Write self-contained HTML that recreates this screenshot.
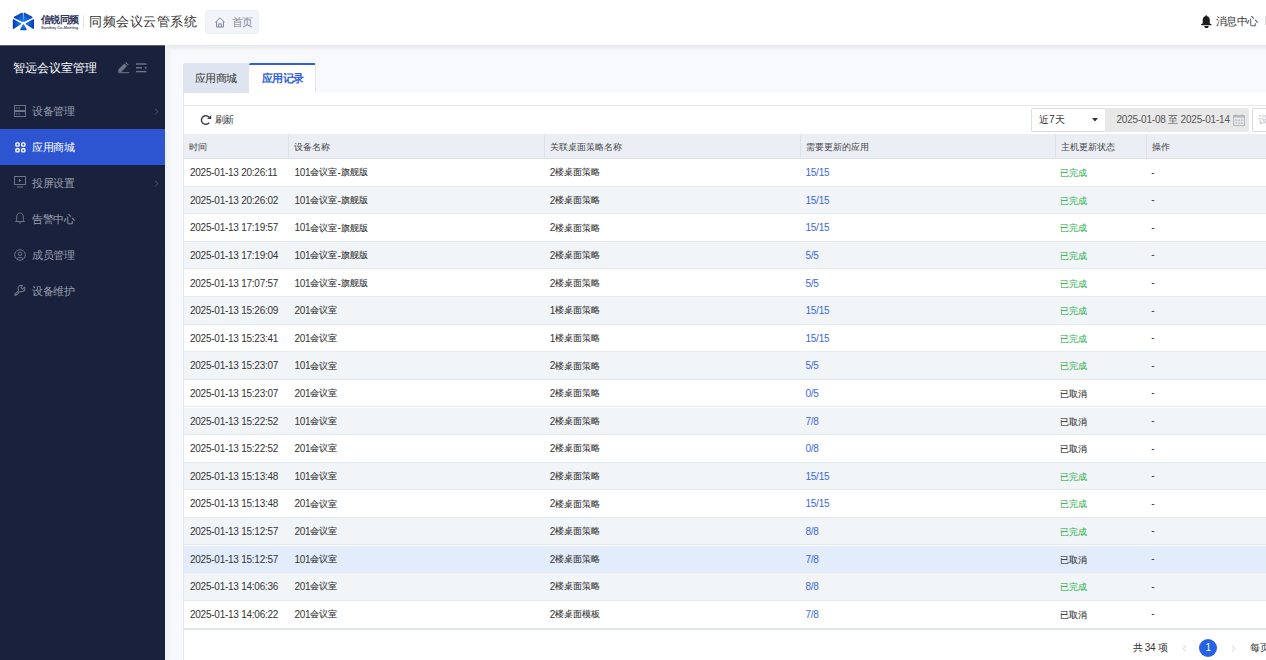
<!DOCTYPE html>
<html><head><meta charset="utf-8">
<style>
*{margin:0;padding:0;box-sizing:border-box}
html,body{width:1266px;height:660px;overflow:hidden;background:#f7f9fc;font-family:"Liberation Sans",sans-serif;color:#333}
.abs{position:absolute}
#hdr{position:absolute;left:0;top:0;width:1266px;height:45px;background:#fff;z-index:5}
#shadow{position:absolute;left:165px;top:45px;width:1101px;height:6px;background:linear-gradient(#e6e7ea,#f7f9fc);}
#lshadow{position:absolute;left:165px;top:45px;width:8px;height:615px;background:linear-gradient(90deg,#eeeff1,rgba(247,249,252,0));}
#side{position:absolute;left:0;top:45px;width:165px;height:615px;background:#19213d;z-index:6;border-top:0.5px solid #5a6070}
.mi{position:absolute;left:0;width:165px;height:36px;}
.mi .t{position:absolute;left:32px;top:0;line-height:36px;font-size:11px;letter-spacing:-0.4px;color:#9a9fad;white-space:nowrap}
.mi.act{background:#2d55d1}
.mi.act .t{color:#fff}
.mi .ar{position:absolute;left:154px;top:14.5px;width:5px;height:7px}
.mi svg.ic{position:absolute;left:14px;top:11px}
.n{font-family:"Liberation Sans",sans-serif}
#card{position:absolute;left:183px;top:93px;width:1083px;height:567px;background:#fff;border-left:1px solid #e3e7ee}
.row{position:absolute;left:183px;width:1083px;height:27.6px;background:#fff;border-bottom:1px solid #e4e8ef;border-left:1px solid #e3e7ee}
.row.st{background:#f2f5f8}
.row.hv{background:#e3ecfb}
.row.last{border-bottom:none}
.td{position:absolute;top:0;line-height:27px;white-space:nowrap;font-size:9px;color:#333;margin-left:-183px}
.td .n{font-size:10px;letter-spacing:-0.25px;position:relative;top:0px}
.td .c{position:relative;top:-0.8px;-webkit-text-stroke:0.08px currentColor}
.td.ok .c,.td.cx .c{top:1px}
.td.lk .n{color:#3b68e2}
.td.ok{color:#36b455}
.th{position:absolute;top:135px;line-height:24px;font-size:9px;color:#444;white-space:nowrap}
.vd{position:absolute;top:134px;width:1px;height:24.1px;background:#dde2ea}
</style></head><body>
<div id="hdr">
  <svg class="abs" style="left:12px;top:11px" width="23" height="20" viewBox="12 11 23 20">
    <defs><radialGradient id="lg" cx="23.4" cy="22.6" r="11" gradientUnits="userSpaceOnUse"><stop offset="0" stop-color="#1d8ff5"/><stop offset="0.55" stop-color="#0f5fd8"/><stop offset="1" stop-color="#0736b5"/></radialGradient></defs>
    <g fill="url(#lg)" stroke="url(#lg)" stroke-width="1.3" stroke-linejoin="round">
    <polygon points="14.4,17.3 22.1,13.2 22.6,21.4"/>
    <polygon points="24.3,13.2 32,17.3 23.8,21.4"/>
    <polygon points="13.4,19.8 20.6,23.7 13.5,28.3"/>
    <polygon points="33.4,19.8 26.2,23.7 33.3,28.3"/>
    <polygon points="23.4,24.9 20.8,29.5 26.1,29.5"/>
    </g>
  </svg>
  <div class="abs" style="left:40.5px;top:14px;font-size:10px;font-weight:700;letter-spacing:-0.4px;color:#30345a;white-space:nowrap;line-height:12px">信锐同频</div>
  <div class="abs" style="left:41px;top:25.8px;font-size:4px;letter-spacing:-0.1px;font-weight:700;color:#55586e;white-space:nowrap;line-height:4px">Sundray Co-Meeting</div>
  <div class="abs" style="left:83px;top:14.5px;width:1px;height:14px;background:#e6e6e6"></div>
  <div class="abs" style="left:89px;top:14px;font-size:13px;letter-spacing:0.5px;color:#333;white-space:nowrap;line-height:16px">同频会议云管系统</div>
  <div class="abs" style="left:205.4px;top:10.1px;width:53.3px;height:23.5px;background:#f1f4f8;border:1px solid #edf0f4;border-radius:2.5px"></div>
  <svg class="abs" style="left:214.5px;top:16.5px" width="10" height="11" viewBox="0 0 10 11"><path d="M0.4 5.4 L5 0.8 L9.6 5.4 M1.6 4.3 V10 H8.4 V4.3 M3.7 10 V6.9 H6.3 V10" fill="none" stroke="#7c8597" stroke-width="1"/></svg>
  <div class="abs" style="left:231.5px;top:16px;font-size:11px;letter-spacing:-0.2px;color:#7d8699;white-space:nowrap;line-height:13px">首页</div>
  <svg class="abs" style="left:1201px;top:14.7px" width="10.5" height="13.6" viewBox="0 0 10.5 13.6"><path d="M5.25 0.3 C5.8 0.3 6.1 0.7 6.2 1.2 C8 1.7 8.8 3.2 8.8 5 V8.4 L10.4 9.3 V10.2 H0.1 V9.3 L1.7 8.4 V5 C1.7 3.2 2.5 1.7 4.3 1.2 C4.4 0.7 4.7 0.3 5.25 0.3 Z M3.3 11 H7.7 C7.7 12.3 6.7 13.2 5.5 13.2 C4.3 13.2 3.3 12.3 3.3 11 Z" fill="#1c1c1c"/></svg>
  <div class="abs" style="left:1215.5px;top:15px;font-size:11px;letter-spacing:-0.5px;color:#333;white-space:nowrap;line-height:13px">消息中心</div>
  <div class="abs" style="left:1265px;top:16px;width:1px;height:9px;background:#ddd"></div>
</div>
<div id="shadow"></div><div id="lshadow"></div>
<div id="side">
  <div class="abs" style="left:12.5px;top:13.6px;font-size:12px;font-weight:500;color:#fff;white-space:nowrap;line-height:16px">智远会议室管理</div>
  <svg class="abs" style="left:117.5px;top:14.7px" width="12" height="13" viewBox="0 0 12 13"><path d="M0.3 11.2 V8.6 L6.4 2.5 L9 5.1 L2.9 11.2 Z M7.2 1.7 L8 0.9 L10.6 3.5 L9.8 4.3 Z" fill="#6f7587"/><rect x="0.3" y="11.2" width="11.1" height="1" fill="#6f7587"/></svg>
  <svg class="abs" style="left:135.5px;top:15.7px" width="11" height="12" viewBox="0 0 11 12"><rect x="0" y="1.3" width="10.4" height="1.4" fill="#6f7587"/><rect x="0" y="5.1" width="6" height="1.4" fill="#6f7587"/><rect x="0" y="8.9" width="10.4" height="1.4" fill="#6f7587"/><path d="M10.4 4.3 L8.2 5.8 L10.4 7.3 Z" fill="#6f7587"/></svg>
  <div class="mi" style="top:47.3px">
    <svg class="ic" width="12" height="12" viewBox="0 0 12 12" style="top:12px"><rect x="0.5" y="0.5" width="11" height="5" fill="none" stroke="#6f7587"/><rect x="0.5" y="6.5" width="11" height="5" fill="none" stroke="#6f7587"/><rect x="2" y="2.5" width="1.5" height="1" fill="#6f7587"/><rect x="4.5" y="2.5" width="1.5" height="1" fill="#6f7587"/><rect x="2" y="8.5" width="1.5" height="1" fill="#6f7587"/><rect x="4.5" y="8.5" width="1.5" height="1" fill="#6f7587"/></svg>
    <div class="t">设备管理</div>
    <svg class="ar" viewBox="0 0 5 7"><path d="M0.8 0.5 L4 3.5 L0.8 6.5" fill="none" stroke="#555c70" stroke-width="0.9"/></svg>
  </div>
  <div class="mi act" style="top:83.3px">
    <svg class="ic" width="11" height="11" viewBox="0 0 11 11" style="left:14.5px;top:12.5px"><g fill="none" stroke="#fff" stroke-width="1.4"><rect x="0.9" y="0.9" width="3.2" height="3.2" rx="0.9"/><rect x="6.7" y="0.9" width="3.2" height="3.2" rx="0.9"/><rect x="0.9" y="6.7" width="3.2" height="3.2" rx="0.9"/><rect x="6.7" y="6.7" width="3.2" height="3.2" rx="0.9"/></g></svg>
    <div class="t">应用商城</div>
  </div>
  <div class="mi" style="top:119.2px">
    <svg class="ic" width="12" height="12" viewBox="0 0 12 12" style="top:11px"><rect x="0.5" y="0.5" width="11" height="8" fill="none" stroke="#6f7587"/><path d="M4.8 2.8 L7.5 4.5 L4.8 6.2Z" fill="#6f7587"/><rect x="3" y="10.5" width="6" height="1" fill="#6f7587"/></svg>
    <div class="t">投屏设置</div>
    <svg class="ar" viewBox="0 0 5 7"><path d="M0.8 0.5 L4 3.5 L0.8 6.5" fill="none" stroke="#555c70" stroke-width="0.9"/></svg>
  </div>
  <div class="mi" style="top:155.1px">
    <svg class="ic" width="12" height="12" viewBox="0 0 12 12" style="top:11px"><path d="M6 1 C8.3 1 9.3 2.8 9.3 5 V8.3 L10.5 9.5 H1.5 L2.7 8.3 V5 C2.7 2.8 3.7 1 6 1Z" fill="none" stroke="#6f7587"/><path d="M5 10.5 H7 V11.5 H5Z" fill="#6f7587"/></svg>
    <div class="t">告警中心</div>
  </div>
  <div class="mi" style="top:191px">
    <svg class="ic" width="12" height="12" viewBox="0 0 12 12" style="top:12px"><circle cx="6" cy="6" r="5.3" fill="none" stroke="#6f7587"/><circle cx="6" cy="4.8" r="1.8" fill="none" stroke="#6f7587"/><path d="M2.8 9.8 C3.5 8 8.5 8 9.2 9.8" fill="none" stroke="#6f7587"/></svg>
    <div class="t">成员管理</div>
  </div>
  <div class="mi" style="top:226.6px">
    <svg class="ic" width="12" height="12" viewBox="0 0 12 12" style="left:14px;top:11.5px"><path d="M1 10.2 L4.4 6.8 L4.1 4.4 C4.1 2.6 5.3 1.4 7.1 1.4 L8.3 1.4 L7.1 3.5 L8.6 5 L10.7 3.2 L10.9 4.6 C10.9 6.3 9.5 7.6 7.8 7.6 L5.5 7.8 L2.2 11.2 C1.9 11.6 1.3 11.6 1 11.2 C0.7 10.9 0.7 10.5 1 10.2 Z" fill="none" stroke="#6f7587" stroke-width="1.1" stroke-linejoin="round"/></svg>
    <div class="t">设备维护</div>
  </div>
</div>

<!-- tabs -->
<div class="abs" style="left:183px;top:63.2px;width:66px;height:29.8px;background:#dfe5f0;border-radius:2px 0 0 0"></div>
<div class="abs" style="left:194.5px;top:63.5px;line-height:29.5px;font-size:11px;letter-spacing:-0.5px;color:#333;white-space:nowrap">应用商城</div>
<div class="abs" style="left:249px;top:63.2px;width:67px;height:29.8px;background:#fff;border-top:2px solid #2f5fe0;border-right:1px solid #e1e5ec;border-radius:2px 2px 0 0"></div>
<div class="abs" style="left:261.5px;top:63.5px;line-height:29.5px;font-size:11px;font-weight:700;letter-spacing:-0.5px;color:#2f5fe0;white-space:nowrap">应用记录</div>
<div class="abs" style="left:316px;top:92.5px;width:950px;height:1px;background:#e3e7ee"></div>

<div id="card"></div>
<div class="abs" style="left:183px;top:105px;width:1083px;height:1px;background:#e3e7ee"></div>
<!-- toolbar -->
<svg class="abs" style="left:200px;top:114px" width="12" height="12" viewBox="0 0 12 12"><path d="M9 3.2 A4.3 4.3 0 1 0 9.2 8.6" fill="none" stroke="#3a3f4a" stroke-width="1.5"/><path d="M11.2 0.9 L11.2 5 L7.1 5Z" fill="#3a3f4a"/></svg>
<div class="abs" style="left:214.5px;top:113.3px;font-size:10px;letter-spacing:-0.2px;color:#333;white-space:nowrap;line-height:14px">刷新</div>

<div class="abs" style="left:1030.5px;top:108.3px;width:75px;height:23.3px;background:#fff;border:1px solid #dcdcdc;border-radius:2px"></div>
<div class="abs" style="left:1039px;top:113px;font-size:10px;color:#333;white-space:nowrap;line-height:14px">近7天</div>
<svg class="abs" style="left:1091.8px;top:117.7px" width="6" height="4" viewBox="0 0 6 4"><path d="M0 0H6L3 3.6Z" fill="#333"/></svg>
<div class="abs" style="left:1105px;top:108.3px;width:144px;height:23.3px;background:#e8e8e8;border-radius:0 2px 2px 0"></div>
<div class="abs" style="left:1116.5px;top:113px;font-size:10px;letter-spacing:-0.2px;color:#555;white-space:nowrap;line-height:14px">2025-01-08 至 2025-01-14</div>
<svg class="abs" style="left:1233px;top:114px" width="12" height="12" viewBox="0 0 12 12"><rect x="0.5" y="1.5" width="11" height="10" fill="none" stroke="#b3b8c2"/><rect x="0.5" y="1.5" width="11" height="2" fill="#b3b8c2"/><g fill="#b3b8c2"><rect x="2.5" y="5.5" width="1.5" height="1.5"/><rect x="5.25" y="5.5" width="1.5" height="1.5"/><rect x="8" y="5.5" width="1.5" height="1.5"/><rect x="2.5" y="8.3" width="1.5" height="1.5"/><rect x="5.25" y="8.3" width="1.5" height="1.5"/><rect x="8" y="8.3" width="1.5" height="1.5"/></g><rect x="2.5" y="0" width="1" height="2" fill="#b3b8c2"/><rect x="8.5" y="0" width="1" height="2" fill="#b3b8c2"/></svg>
<div class="abs" style="left:1252.3px;top:108.3px;width:30px;height:23.3px;background:#fff;border:1px solid #dcdcdc;border-radius:2px"></div>
<div class="abs" style="left:1258.3px;top:113.3px;font-size:10px;color:#c0c4cc;white-space:nowrap;line-height:14px">设备</div>

<!-- table header -->
<div class="abs" style="left:183px;top:134px;width:1083px;height:25.1px;background:#ebeef5;border-bottom:1px solid #dde2ea;border-left:1px solid #e3e7ee"></div>
<div class="vd" style="left:287.5px"></div><div class="vd" style="left:544.3px"></div><div class="vd" style="left:799.5px"></div><div class="vd" style="left:1055.2px"></div><div class="vd" style="left:1145.7px"></div>
<div class="th" style="left:189.0px">时间</div><div class="th" style="left:293.5px">设备名称</div><div class="th" style="left:550.3px">关联桌面策略名称</div><div class="th" style="left:805.5px">需要更新的应用</div><div class="th" style="left:1061.2px">主机更新状态</div><div class="th" style="left:1151.7px">操作</div>
<div class="row" style="top:159.10px"><div class="td" style="left:189.0px"><span class="n">2025-01-13 20:26:11</span></div><div class="td" style="left:293.5px"><span class="n">101</span><span class="c">会议室</span><span class="n">-</span><span class="c">旗舰版</span></div><div class="td" style="left:548.8px"><span class="n">2</span><span class="c">楼桌面策略</span></div><div class="td lk" style="left:804.5px"><span class="n">15/15</span></div><div class="td ok" style="left:1059.2px"><span class="c">已完成</span></div><div class="td" style="left:1150.2px"><span class="n" style="top:-0.5px">-</span></div></div>
<div class="row st" style="top:186.70px"><div class="td" style="left:189.0px"><span class="n">2025-01-13 20:26:02</span></div><div class="td" style="left:293.5px"><span class="n">101</span><span class="c">会议室</span><span class="n">-</span><span class="c">旗舰版</span></div><div class="td" style="left:548.8px"><span class="n">2</span><span class="c">楼桌面策略</span></div><div class="td lk" style="left:804.5px"><span class="n">15/15</span></div><div class="td ok" style="left:1059.2px"><span class="c">已完成</span></div><div class="td" style="left:1150.2px"><span class="n" style="top:-0.5px">-</span></div></div>
<div class="row" style="top:214.30px"><div class="td" style="left:189.0px"><span class="n">2025-01-13 17:19:57</span></div><div class="td" style="left:293.5px"><span class="n">101</span><span class="c">会议室</span><span class="n">-</span><span class="c">旗舰版</span></div><div class="td" style="left:548.8px"><span class="n">2</span><span class="c">楼桌面策略</span></div><div class="td lk" style="left:804.5px"><span class="n">15/15</span></div><div class="td ok" style="left:1059.2px"><span class="c">已完成</span></div><div class="td" style="left:1150.2px"><span class="n" style="top:-0.5px">-</span></div></div>
<div class="row st" style="top:241.90px"><div class="td" style="left:189.0px"><span class="n">2025-01-13 17:19:04</span></div><div class="td" style="left:293.5px"><span class="n">101</span><span class="c">会议室</span><span class="n">-</span><span class="c">旗舰版</span></div><div class="td" style="left:548.8px"><span class="n">2</span><span class="c">楼桌面策略</span></div><div class="td lk" style="left:804.5px"><span class="n">5/5</span></div><div class="td ok" style="left:1059.2px"><span class="c">已完成</span></div><div class="td" style="left:1150.2px"><span class="n" style="top:-0.5px">-</span></div></div>
<div class="row" style="top:269.50px"><div class="td" style="left:189.0px"><span class="n">2025-01-13 17:07:57</span></div><div class="td" style="left:293.5px"><span class="n">101</span><span class="c">会议室</span><span class="n">-</span><span class="c">旗舰版</span></div><div class="td" style="left:548.8px"><span class="n">2</span><span class="c">楼桌面策略</span></div><div class="td lk" style="left:804.5px"><span class="n">5/5</span></div><div class="td ok" style="left:1059.2px"><span class="c">已完成</span></div><div class="td" style="left:1150.2px"><span class="n" style="top:-0.5px">-</span></div></div>
<div class="row st" style="top:297.10px"><div class="td" style="left:189.0px"><span class="n">2025-01-13 15:26:09</span></div><div class="td" style="left:293.5px"><span class="n">201</span><span class="c">会议室</span></div><div class="td" style="left:548.8px"><span class="n">1</span><span class="c">楼桌面策略</span></div><div class="td lk" style="left:804.5px"><span class="n">15/15</span></div><div class="td ok" style="left:1059.2px"><span class="c">已完成</span></div><div class="td" style="left:1150.2px"><span class="n" style="top:-0.5px">-</span></div></div>
<div class="row" style="top:324.70px"><div class="td" style="left:189.0px"><span class="n">2025-01-13 15:23:41</span></div><div class="td" style="left:293.5px"><span class="n">201</span><span class="c">会议室</span></div><div class="td" style="left:548.8px"><span class="n">1</span><span class="c">楼桌面策略</span></div><div class="td lk" style="left:804.5px"><span class="n">15/15</span></div><div class="td ok" style="left:1059.2px"><span class="c">已完成</span></div><div class="td" style="left:1150.2px"><span class="n" style="top:-0.5px">-</span></div></div>
<div class="row st" style="top:352.30px"><div class="td" style="left:189.0px"><span class="n">2025-01-13 15:23:07</span></div><div class="td" style="left:293.5px"><span class="n">101</span><span class="c">会议室</span></div><div class="td" style="left:548.8px"><span class="n">2</span><span class="c">楼桌面策略</span></div><div class="td lk" style="left:804.5px"><span class="n">5/5</span></div><div class="td ok" style="left:1059.2px"><span class="c">已完成</span></div><div class="td" style="left:1150.2px"><span class="n" style="top:-0.5px">-</span></div></div>
<div class="row" style="top:379.90px"><div class="td" style="left:189.0px"><span class="n">2025-01-13 15:23:07</span></div><div class="td" style="left:293.5px"><span class="n">201</span><span class="c">会议室</span></div><div class="td" style="left:548.8px"><span class="n">2</span><span class="c">楼桌面策略</span></div><div class="td lk" style="left:804.5px"><span class="n">0/5</span></div><div class="td cx" style="left:1059.2px"><span class="c">已取消</span></div><div class="td" style="left:1150.2px"><span class="n" style="top:-0.5px">-</span></div></div>
<div class="row st" style="top:407.50px"><div class="td" style="left:189.0px"><span class="n">2025-01-13 15:22:52</span></div><div class="td" style="left:293.5px"><span class="n">101</span><span class="c">会议室</span></div><div class="td" style="left:548.8px"><span class="n">2</span><span class="c">楼桌面策略</span></div><div class="td lk" style="left:804.5px"><span class="n">7/8</span></div><div class="td cx" style="left:1059.2px"><span class="c">已取消</span></div><div class="td" style="left:1150.2px"><span class="n" style="top:-0.5px">-</span></div></div>
<div class="row" style="top:435.10px"><div class="td" style="left:189.0px"><span class="n">2025-01-13 15:22:52</span></div><div class="td" style="left:293.5px"><span class="n">201</span><span class="c">会议室</span></div><div class="td" style="left:548.8px"><span class="n">2</span><span class="c">楼桌面策略</span></div><div class="td lk" style="left:804.5px"><span class="n">0/8</span></div><div class="td cx" style="left:1059.2px"><span class="c">已取消</span></div><div class="td" style="left:1150.2px"><span class="n" style="top:-0.5px">-</span></div></div>
<div class="row st" style="top:462.70px"><div class="td" style="left:189.0px"><span class="n">2025-01-13 15:13:48</span></div><div class="td" style="left:293.5px"><span class="n">101</span><span class="c">会议室</span></div><div class="td" style="left:548.8px"><span class="n">2</span><span class="c">楼桌面策略</span></div><div class="td lk" style="left:804.5px"><span class="n">15/15</span></div><div class="td ok" style="left:1059.2px"><span class="c">已完成</span></div><div class="td" style="left:1150.2px"><span class="n" style="top:-0.5px">-</span></div></div>
<div class="row" style="top:490.30px"><div class="td" style="left:189.0px"><span class="n">2025-01-13 15:13:48</span></div><div class="td" style="left:293.5px"><span class="n">201</span><span class="c">会议室</span></div><div class="td" style="left:548.8px"><span class="n">2</span><span class="c">楼桌面策略</span></div><div class="td lk" style="left:804.5px"><span class="n">15/15</span></div><div class="td ok" style="left:1059.2px"><span class="c">已完成</span></div><div class="td" style="left:1150.2px"><span class="n" style="top:-0.5px">-</span></div></div>
<div class="row st" style="top:517.90px"><div class="td" style="left:189.0px"><span class="n">2025-01-13 15:12:57</span></div><div class="td" style="left:293.5px"><span class="n">201</span><span class="c">会议室</span></div><div class="td" style="left:548.8px"><span class="n">2</span><span class="c">楼桌面策略</span></div><div class="td lk" style="left:804.5px"><span class="n">8/8</span></div><div class="td ok" style="left:1059.2px"><span class="c">已完成</span></div><div class="td" style="left:1150.2px"><span class="n" style="top:-0.5px">-</span></div></div>
<div class="row hv" style="top:545.50px"><div class="td" style="left:189.0px"><span class="n">2025-01-13 15:12:57</span></div><div class="td" style="left:293.5px"><span class="n">101</span><span class="c">会议室</span></div><div class="td" style="left:548.8px"><span class="n">2</span><span class="c">楼桌面策略</span></div><div class="td lk" style="left:804.5px"><span class="n">7/8</span></div><div class="td cx" style="left:1059.2px"><span class="c">已取消</span></div><div class="td" style="left:1150.2px"><span class="n" style="top:-0.5px">-</span></div></div>
<div class="row st" style="top:573.10px"><div class="td" style="left:189.0px"><span class="n">2025-01-13 14:06:36</span></div><div class="td" style="left:293.5px"><span class="n">201</span><span class="c">会议室</span></div><div class="td" style="left:548.8px"><span class="n">2</span><span class="c">楼桌面策略</span></div><div class="td lk" style="left:804.5px"><span class="n">8/8</span></div><div class="td ok" style="left:1059.2px"><span class="c">已完成</span></div><div class="td" style="left:1150.2px"><span class="n" style="top:-0.5px">-</span></div></div>
<div class="row last" style="top:600.70px"><div class="td" style="left:189.0px"><span class="n">2025-01-13 14:06:22</span></div><div class="td" style="left:293.5px"><span class="n">201</span><span class="c">会议室</span></div><div class="td" style="left:548.8px"><span class="n">2</span><span class="c">楼桌面模板</span></div><div class="td lk" style="left:804.5px"><span class="n">7/8</span></div><div class="td cx" style="left:1059.2px"><span class="c">已取消</span></div><div class="td" style="left:1150.2px"><span class="n" style="top:-0.5px">-</span></div></div>
<div class="abs" style="left:183px;top:628.3px;width:1083px;height:2px;background:#dfe4eb"></div>

<!-- pagination -->
<div class="abs" style="left:1132.5px;top:641px;font-size:10px;letter-spacing:-0.3px;color:#333;white-space:nowrap;line-height:13px">共 34 项</div>
<svg class="abs" style="left:1182px;top:644.5px" width="5" height="7" viewBox="0 0 5 7"><path d="M4.2 0.5 L1 3.5 L4.2 6.5" fill="none" stroke="#c8ccd4" stroke-width="0.9"/></svg>
<div class="abs" style="left:1199.3px;top:639px;width:18px;height:18px;border-radius:9px;background:#2563e3;color:#fff;font-size:10px;line-height:18px;text-align:center">1</div>
<svg class="abs" style="left:1230.5px;top:644.5px" width="5" height="7" viewBox="0 0 5 7"><path d="M0.8 0.5 L4 3.5 L0.8 6.5" fill="none" stroke="#c8ccd4" stroke-width="0.9"/></svg>
<div class="abs" style="left:1250px;top:641px;font-size:10px;color:#333;white-space:nowrap;line-height:13px">每页</div>
</body></html>
